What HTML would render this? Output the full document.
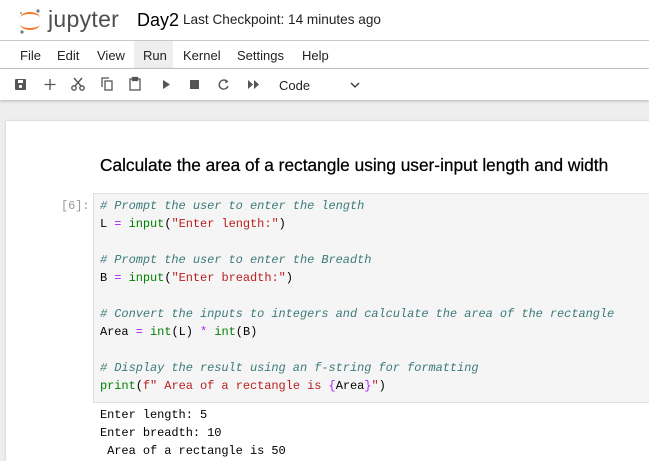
<!DOCTYPE html>
<html><head><style>
body{margin:0;width:649px;height:461px;overflow:hidden;background:#eeeeee;font-family:"Liberation Sans",sans-serif;position:relative}
.hdr{position:absolute;left:0;top:0;width:649px;height:40px;background:#fff;border-bottom:1px solid #c8c8c8}
.menu{position:absolute;left:0;top:41px;width:649px;height:27px;background:#fff;border-bottom:1px solid #c8c8c8;font-size:13px;color:#222}
.menu span{position:absolute;top:7px}
.tb{position:absolute;left:0;top:69px;width:649px;height:31px;background:#fff;box-shadow:0 1px 3px rgba(0,0,0,.25)}
.panel{position:absolute;left:6px;top:121px;width:643px;height:340px;background:#fff;box-shadow:0 0 2px rgba(0,0,0,.2)}
.code{position:absolute;left:93px;top:193px;width:560px;height:208px;background:#f5f5f5;border:1px solid #e0e0e0}
pre{margin:0;font-family:"Liberation Mono",monospace;font-size:12px;line-height:18px;color:#000;letter-spacing:-0.06px}
.c{color:#3d7a7a;font-style:italic}.g{color:#008000}.s{color:#ba2121}.p{color:#aa22ff}.o{color:#aa22ff}
</style></head><body>
<div class="hdr">
<svg style="position:absolute;left:17px;top:7px" width="26" height="28" viewBox="0 0 26 28">
<path d="M3 11 A10 6 0 0 1 23 11 A10 4 0 0 0 3 11Z" fill="#f37726"/>
<path d="M3 17 A10 6 0 0 0 23 17 A10 4 0 0 1 3 17Z" fill="#f37726"/>
<circle cx="21" cy="4" r="1.6" fill="#777"/><circle cx="5" cy="25" r="1.6" fill="#777"/><circle cx="4" cy="6" r="1" fill="#999"/>
</svg>
<div style="position:absolute;left:48px;top:6px;font-size:23px;color:#4e4e4e;letter-spacing:0.3px">jupyter</div>
<div style="position:absolute;left:137px;top:10px;font-size:18px;color:#000">Day2</div>
<div style="position:absolute;left:183px;top:12px;font-size:13.6px;color:#222">Last Checkpoint: 14 minutes ago</div>
</div>
<div class="menu">
<div style="position:absolute;left:134px;top:0;width:39px;height:27px;background:#eeeeee"></div>
<span style="left:20px">File</span><span style="left:57px">Edit</span><span style="left:97px">View</span><span style="left:143px">Run</span><span style="left:183px">Kernel</span><span style="left:237px">Settings</span><span style="left:302px">Help</span>
</div>
<div class="tb">
<svg style="position:absolute;left:0;top:0" width="360" height="31">
<g fill="#555" stroke="#555">
<rect x="15" y="10" width="11" height="11" rx="1" stroke="none"/><rect x="18" y="11" width="5" height="3" fill="#fff" stroke="none"/><circle cx="20.5" cy="17.5" r="1.6" fill="#fff" stroke="none"/>
<path d="M50 10v11M44.5 15.5h11" stroke-width="1.3" fill="none"/>
<g fill="none" stroke-width="1.4"><circle cx="74" cy="19" r="2.2"/><circle cx="82" cy="19" r="2.2"/><path d="M75 17L82 9M81 17L74 9"/></g>
<g fill="none" stroke-width="1.3"><rect x="105" y="12" width="7" height="9"/><path d="M102 18V9h7"/></g>
<g fill="none" stroke-width="1.3"><rect x="130" y="10" width="10" height="11"/><rect x="132.5" y="8.5" width="5" height="3" fill="#555"/></g>
<path d="M163 11l7 4.5-7 4.5z" stroke="none"/>
<rect x="190" y="11" width="9" height="9" stroke="none"/>
<path d="M227 12.5A4.5 4.5 0 1 0 228 17" fill="none" stroke-width="1.4"/><path d="M225 10l3.5 2.5-3 2z" stroke="none"/>
<path d="M248 11l5 4.5-5 4.5zM254 11l5 4.5-5 4.5z" stroke="none"/>
<path d="M351 14l4 4 4-4" fill="none" stroke="#333" stroke-width="1.3"/>
</g></svg>
<div style="position:absolute;left:279px;top:9px;font-size:13px;color:#222">Code</div>
</div>
<div class="panel"></div>
<div style="position:absolute;left:100px;top:155px;font-size:17.3px;color:#000;-webkit-text-stroke:0.25px #000">Calculate the area of a rectangle using user-input length and width</div>
<pre style="position:absolute;left:61px;top:197px;color:#999">[6]:</pre>
<div class="code"></div>
<pre style="position:absolute;left:100px;top:197px"><span class="c"># Prompt the user to enter the length</span>
L <span class="o">=</span> <span class="g">input</span>(<span class="s">"Enter length:"</span>)

<span class="c"># Prompt the user to enter the Breadth</span>
B <span class="o">=</span> <span class="g">input</span>(<span class="s">"Enter breadth:"</span>)

<span class="c"># Convert the inputs to integers and calculate the area of the rectangle</span>
Area <span class="o">=</span> <span class="g">int</span>(L) <span class="o">*</span> <span class="g">int</span>(B)

<span class="c"># Display the result using an f-string for formatting</span>
<span class="g">print</span>(<span class="s">f" Area of a rectangle is </span><span class="p">{</span>Area<span class="p">}</span><span class="s">"</span>)</pre>
<pre style="position:absolute;left:100px;top:406px">Enter length: 5
Enter breadth: 10
 Area of a rectangle is 50</pre>
</body></html>
